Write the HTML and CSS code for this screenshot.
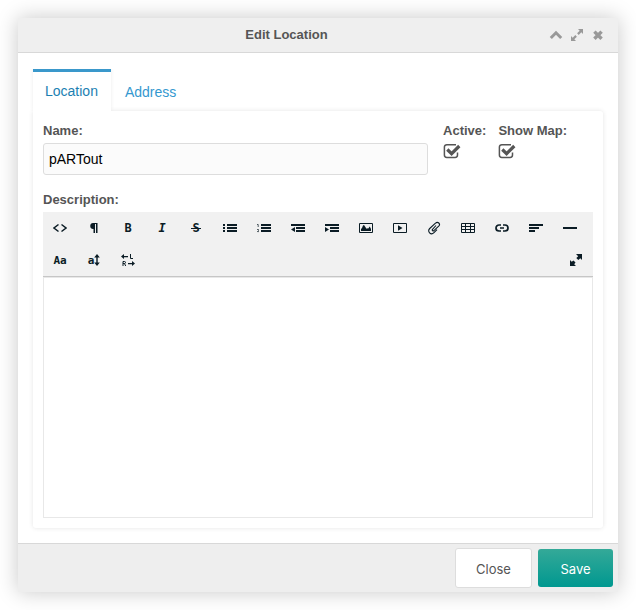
FILE: index.html
```html
<!DOCTYPE html>
<html lang="en">
<head>
<meta charset="utf-8">
<title>Edit Location</title>
<link rel="stylesheet" href="styles.css">
</head>
<body>
<form class="dialog">
  <header class="dialog-header">
    <h1 class="dialog-title">Edit Location</h1>
    <div class="window-actions">
      <button type="button" class="window-button" aria-label="Collapse"><svg width="14" height="14" viewBox="0 0 14 14"><path d="M1.800 10 7 4.800 12.200 10" fill="none" stroke="currentColor" stroke-width="3"/></svg></button>
      <button type="button" class="window-button" aria-label="Maximize"><svg width="14" height="14" viewBox="0 0 14 14"><path d="M8 1h5v5l-1.7-1.7-2.6 2.6-1.6-1.6 2.6-2.6zM1 13V8l1.7 1.7 2.6-2.6 1.6 1.6-2.6 2.6L6 13z" fill="currentColor"/></svg></button>
      <button type="button" class="window-button" aria-label="Close dialog"><svg width="14" height="14" viewBox="0 0 14 14"><path d="M3.400 3.600l7.200 7.200M10.600 3.600l-7.200 7.200" fill="none" stroke="currentColor" stroke-width="3.400"/></svg></button>
    </div>
  </header>

  <main class="dialog-body">
    <nav class="tabs">
      <a class="tab tab-active" href="#location">Location</a>
      <a class="tab" href="#address">Address</a>
    </nav>
    <section class="panel" id="location">
      <div class="fields">
        <div class="field field-name">
          <label for="name">Name:</label>
          <input class="text-input" id="name" type="text" value="pARTout">
        </div>
        <div class="field">
          <label for="active">Active:</label>
          <span class="check">
            <input id="active" type="checkbox" checked>
            <svg width="18" height="16" viewBox="0 0 18 16"><path d="M13 1.700H3.800A2.400 2.400 0 0 0 1.400 4.100v8a2.400 2.400 0 0 0 2.400 2.400h8.300a2.400 2.400 0 0 0 2.400-2.400V9.500" fill="none" stroke="currentColor" stroke-width="1.500"/><path d="M4.300 6.500l4.300 4.200 7.700-7.700" fill="none" stroke="currentColor" stroke-width="3.200"/></svg>
          </span>
        </div>
        <div class="field">
          <label for="show-map">Show Map:</label>
          <span class="check">
            <input id="show-map" type="checkbox" checked>
            <svg width="18" height="16" viewBox="0 0 18 16"><path d="M13 1.700H3.800A2.400 2.400 0 0 0 1.400 4.100v8a2.400 2.400 0 0 0 2.400 2.400h8.300a2.400 2.400 0 0 0 2.400-2.400V9.500" fill="none" stroke="currentColor" stroke-width="1.500"/><path d="M4.300 6.500l4.300 4.200 7.700-7.700" fill="none" stroke="currentColor" stroke-width="3.200"/></svg>
          </span>
        </div>
      </div>

      <div class="field field-description">
        <label for="description">Description:</label>
        <div class="editor">
          <div class="toolbar">
            <button type="button" class="tool" aria-label="Source"><svg width="14" height="14" viewBox="0 0 14 14"><path d="M5.500 3.500 1 7l4.500 3.500M8.500 3.500 13 7l-4.500 3.500" fill="none" stroke="currentColor" stroke-width="1.500"/></svg></button>
            <button type="button" class="tool" aria-label="Formatting"><svg width="14" height="14" viewBox="0 0 14 14"><path d="M10.500 2v10H9V3H8v9H6.500V8A3 3 0 0 1 6 2z" fill="currentColor"/></svg></button>
            <button type="button" class="tool" aria-label="Bold">B</button>
            <button type="button" class="tool tool-italic" aria-label="Italic">I</button>
            <button type="button" class="tool tool-strike" aria-label="Strikethrough">S</button>
            <button type="button" class="tool" aria-label="Unordered list"><svg width="14" height="14" viewBox="0 0 14 14"><path d="M0 3h2v2H0zM4 3h10v2H4zM0 6h2v2H0zM4 6h10v2H4zM0 9h2v2H0zM4 9h10v2H4z" fill="currentColor"/></svg></button>
            <button type="button" class="tool" aria-label="Ordered list"><svg width="14" height="14" viewBox="0 0 14 14"><path d="M4 3h10v2H4zM4 6h10v2H4zM4 9h10v2H4z" fill="currentColor"/><path d="M0 3.500h1.200v2.500M0 8.500h1.500v1L.4 10.600H2" fill="none" stroke="currentColor" stroke-width=".7"/></svg></button>
            <button type="button" class="tool" aria-label="Outdent"><svg width="14" height="14" viewBox="0 0 14 14"><path d="M0 3h14v2H0zM5 6h9v2H5zM5 9h9v2H5zM4 6v5L0 8.500z" fill="currentColor"/></svg></button>
            <button type="button" class="tool" aria-label="Indent"><svg width="14" height="14" viewBox="0 0 14 14"><path d="M0 3h14v2H0zM5 6h9v2H5zM5 9h9v2H5zM0 6v5l4-2.500z" fill="currentColor"/></svg></button>
            <button type="button" class="tool" aria-label="Image"><svg width="14" height="14" viewBox="0 0 14 14"><path d="M.5 2.500h13v9H.5z" fill="none" stroke="currentColor"/><path d="M2 10V8l1-1 1-2.500L5 4l1 1.500L7 7l1 1 .8-1 .7.500 1-2 .8 1L12 8v2z" fill="currentColor"/></svg></button>
            <button type="button" class="tool" aria-label="Video"><svg width="14" height="14" viewBox="0 0 14 14"><path d="M.5 2.500h13v9H.5z" fill="none" stroke="currentColor"/><path d="M5 4.200v5.600L9.500 7z" fill="currentColor"/></svg></button>
            <button type="button" class="tool" aria-label="File"><svg width="14" height="14" viewBox="0 0 14 14"><path d="M9 4.500 5.500 8.300c-.8.900.4 2.200 1.400 1.300l4.800-4.400c2.200-2.400-.9-5.200-3.200-3L2.700 7.500c-3 3 1.200 7.200 4.300 4.200l3-3" fill="none" stroke="currentColor" stroke-width="1.100"/></svg></button>
            <button type="button" class="tool" aria-label="Table"><svg width="14" height="14" viewBox="0 0 14 14"><path d="M.5 2.500h13v9H.5zM0 5.500h14M0 8.500h14M4.500 2v10M9.500 2v10" fill="none" stroke="currentColor"/></svg></button>
            <button type="button" class="tool" aria-label="Link"><svg width="14" height="14" viewBox="0 0 14 14"><path d="M6 4H4a3 3 0 0 0 0 6h2M8 10h2a3 3 0 0 0 0-6H8M5 7h4" fill="none" stroke="currentColor" stroke-width="1.700"/></svg></button>
            <button type="button" class="tool" aria-label="Alignment"><svg width="14" height="14" viewBox="0 0 14 14"><path d="M0 3h14v2H0zM0 6h10v2H0zM0 9h6v2H0z" fill="currentColor"/></svg></button>
            <button type="button" class="tool" aria-label="Horizontal rule"><svg width="14" height="14" viewBox="0 0 14 14"><path d="M0 6h14v2H0z" fill="currentColor"/></svg></button>
            <button type="button" class="tool tool-small" aria-label="Font family">Aa</button>
            <button type="button" class="tool tool-small" aria-label="Font size">a<svg width="6" height="14" viewBox="0 0 6 14"><path d="M3 1l2.800 3.500H3.700v5h2.100L3 13 .2 9.500h2.100v-5H.2z" fill="currentColor"/></svg></button>
            <button type="button" class="tool" aria-label="Text direction"><svg width="14" height="14" viewBox="0 0 14 14"><path d="M0 3.500 3 1v2h4v1.300H3V6zM14 10.500 11 8v2H7v1.300h4V13z" fill="currentColor"/><path d="M9.500 1v4.500H12M2 13V8.500h1.500q1 0 1 1t-1 1H2M3.500 10.500 4.700 13" fill="none" stroke="currentColor"/></svg></button>
            <button type="button" class="tool tool-last" aria-label="Fullscreen"><svg width="14" height="14" viewBox="0 0 14 14"><path d="M7 1h6v6l-1.700-1.700-2 1.700L7.300 5l1.900-1.800zM1 13V7l1.700 1.700L4.500 7.500l2 2-1.300 1.700L7 13z" fill="currentColor"/></svg></button>
          </div>
          <textarea class="editor-area" id="description"></textarea>
        </div>
      </div>
    </section>
  </main>

  <footer class="dialog-footer">
    <button type="button" class="button">Close</button>
    <button type="submit" class="button button-primary">Save</button>
  </footer>
</form>
</body>
</html>
```

FILE: styles.css
```css
* {
  box-sizing: border-box;
}

body {
  margin: 0;
  padding: 18px;
  min-height: 100vh;
  display: flex;
  background: #fff;
  color: #555;
  font: 13px/18px "Liberation Sans", Arial, sans-serif;
}

button,
input,
textarea {
  margin: 0;
  font: inherit;
}

svg {
  display: block;
}

.dialog {
  flex: 1;
  min-width: 0;
  display: flex;
  flex-direction: column;
  background: #fff;
  box-shadow: 0 0 20px rgba(0, 0, 0, 0.22);
}

.dialog-header {
  display: flex;
  align-items: center;
  height: 35px;
  padding: 0 10px;
  background: #efefef;
  border-bottom: 1px solid #d8d8d8;
}

.dialog-title {
  flex: 1;
  margin: 0;
  font-size: 13px;
  text-align: center;
}

.window-actions {
  display: flex;
}

.window-button {
  display: grid;
  place-items: center;
  width: 21px;
  height: 20px;
  padding: 0;
  border: 0;
  background: none;
  color: #999;
}

.dialog-body {
  flex: 1;
  display: flex;
  flex-direction: column;
  padding: 16px 15px 15px;
}

.tabs {
  display: flex;
  gap: 2px;
}

.tab {
  height: 42px;
  padding: 14px 12px 0;
  color: #3498cf;
  font-size: 14px;
  text-decoration: none;
}

.tab-active {
  position: relative;
  padding: 10px 13px 0 12px;
  border-top: 3px solid #3a98cb;
  background: #fff;
  color: #1c7fb2;
  box-shadow: 0 -1px 4px rgba(0, 0, 0, 0.08);
  clip-path: inset(0 -5px 0 -5px);
}

.panel {
  flex: 1;
  display: flex;
  flex-direction: column;
  gap: 16px;
  padding: 11px 10px 10px;
  border-radius: 0 3px 3px 3px;
  background: #fff;
  box-shadow: 0 0 5px rgba(0, 0, 0, 0.11);
}

.fields {
  display: flex;
}

.field {
  display: flex;
  flex-direction: column;
  gap: 3px;
  padding-right: 12px;
  font-weight: bold;
}

.field-name {
  flex: 1;
  padding-right: 15px;
}

.fields .field:last-child {
  padding-right: 26px;
}

.text-input {
  width: 100%;
  height: 32px;
  padding: 0 5px;
  border: 1px solid #ddd;
  border-radius: 3px;
  background: #fbfbfb;
  color: #000;
  font-size: 14px;
  font-weight: normal;
}

.check {
  display: grid;
  width: 18px;
  height: 16px;
}

.check input,
.check svg {
  grid-area: 1 / 1;
}

.check input {
  appearance: none;
}

.check svg {
  pointer-events: none;
}

.field-description {
  flex: 1;
  padding-right: 0;
}

.editor {
  flex: 1;
  display: flex;
  flex-direction: column;
}

.toolbar {
  display: flex;
  flex-wrap: wrap;
  background: #f1f1f1;
  border-bottom: 1px solid #c6c6c6;
}

.tool {
  display: flex;
  align-items: center;
  justify-content: center;
  width: 34px;
  height: 32px;
  padding: 0;
  border: 0;
  background: none;
  color: #0b1c25;
  font: bold 12px "DejaVu Sans Mono", monospace;
}

.tool-italic {
  font-style: italic;
}

.tool-strike {
  background: linear-gradient(currentColor, currentColor) center / 10px 1px no-repeat;
}

.tool-small {
  font-size: 11px;
}

.tool-last {
  margin-left: auto;
}

.editor-area {
  flex: 1;
  width: 100%;
  min-height: 120px;
  padding: 10px;
  border: 1px solid #e8e8e8;
  background: #fff;
  resize: none;
}

.dialog-footer {
  display: flex;
  align-items: center;
  justify-content: flex-end;
  gap: 6px;
  height: 49px;
  padding: 0 5px;
  background: #eee;
  border-top: 1px solid #d8d8d8;
}

.button {
  min-width: 77px;
  height: 40px;
  padding: 2px 16px 0;
  border: 1px solid #ddd;
  border-radius: 3px;
  background: #fff;
  color: #555;
  font-family: Inter, sans-serif;
}

.button-primary {
  min-width: 75px;
  height: 38px;
  border: 0;
  background: linear-gradient(#34a998, #009890);
  color: #fff;
}
```
